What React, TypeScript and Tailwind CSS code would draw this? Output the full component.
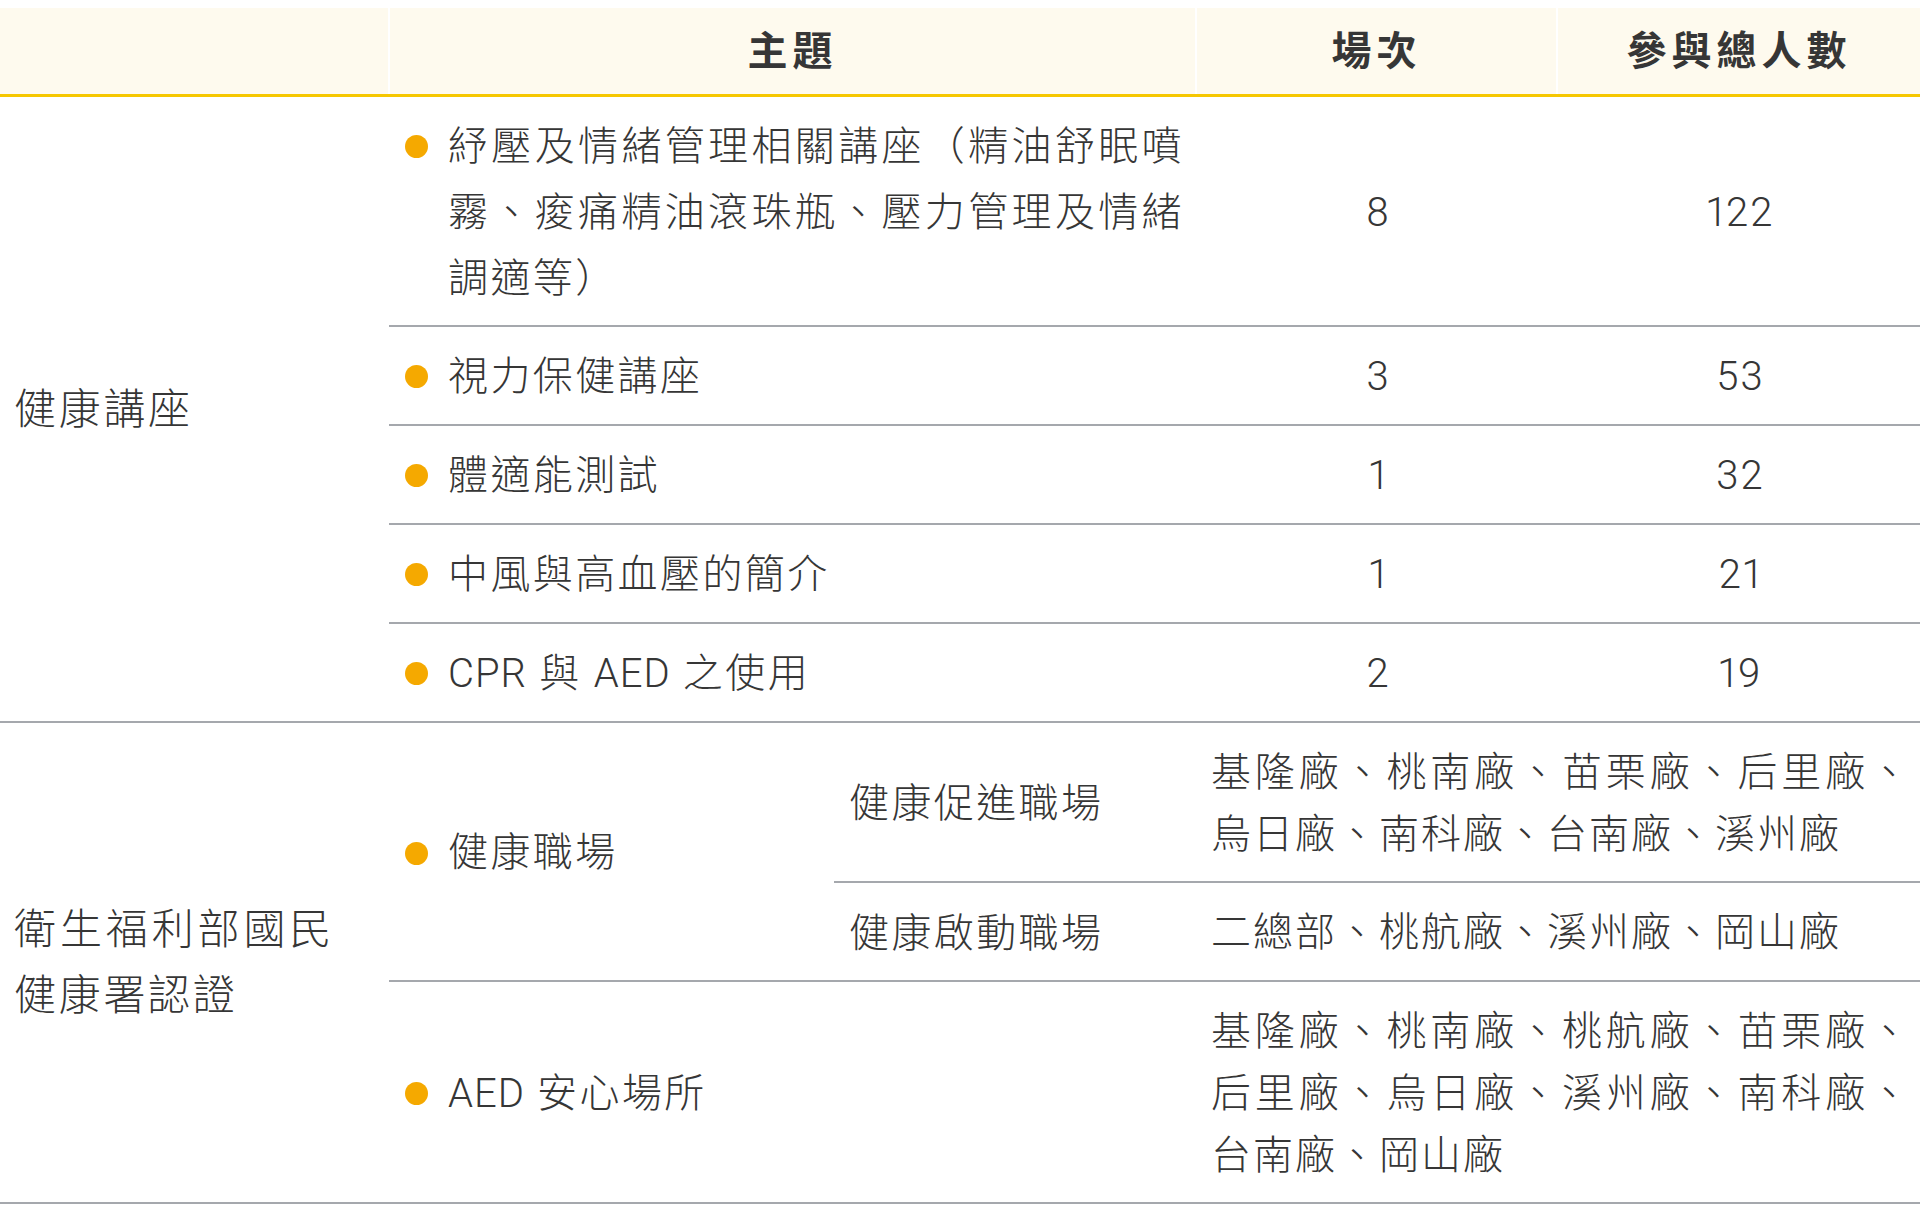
import React from "react";

const font = { fontFamily: '"Roboto", "Noto Sans CJK TC", sans-serif' };

function Bullet() {
  return (
    <span className="flex h-[66px] shrink-0 items-center">
      <span className="block h-[23px] w-[23px] rounded-full bg-[#f5a900]" />
    </span>
  );
}

function Topic({ children }: { children: React.ReactNode }) {
  return (
    <div className="flex">
      <Bullet />
      <div className="ml-[20px] w-[736px] text-justify leading-[66px] tracking-[2.4px]">{children}</div>
    </div>
  );
}

function Stations({ children }: { children: React.ReactNode }) {
  return <div className="w-[700px] text-justify leading-[62px] tracking-[2px]">{children}</div>;
}

function Lat({ children }: { children: React.ReactNode }) {
  return <span className="tracking-[1px]">{children}</span>;
}

const td = "border-b-2 border-[#a5a8ad] align-middle";
const th =
  "border-b-[3px] border-l-2 border-[#f6c700] border-l-white bg-[#fefaee] pt-[2px] text-center font-bold leading-[56px] tracking-[5px]";

export default function App() {
  const rows: { t: React.ReactNode; n: string; p: string }[] = [
    { t: "紓壓及情緒管理相關講座（精油舒眠噴霧、痠痛精油滾珠瓶、壓力管理及情緒調適等）", n: "8", p: "122" },
    { t: "視力保健講座", n: "3", p: "53" },
    { t: "體適能測試", n: "1", p: "32" },
    { t: "中風與高血壓的簡介", n: "1", p: "21" },
    {
      t: (
        <>
          <Lat>CPR</Lat> 與 <Lat>AED</Lat> 之使用
        </>
      ),
      n: "2",
      p: "19",
    },
  ];
  return (
    <div className="min-h-[1210px] w-[1920px] bg-white pt-2 text-[40px] font-light text-[#363636] proportional-nums" style={font}>
      <table className="w-[1920px] table-fixed border-collapse">
        <colgroup>
          <col className="w-[389px]" />
          <col className="w-[445px]" />
          <col className="w-[362px]" />
          <col className="w-[361px]" />
          <col className="w-[363px]" />
        </colgroup>
        <thead>
          <tr className="h-[87px]">
            <th className="border-b-[3px] border-[#f6c700] bg-[#fefaee]" />
            <th colSpan={2} className={th}>
              主題
            </th>
            <th className={th}>場次</th>
            <th className={th}>參與總人數</th>
          </tr>
        </thead>
        <tbody>
          {rows.map((r, i) => (
            <tr key={i}>
              {i === 0 && (
                <td rowSpan={5} className={`${td} pl-[14px] pt-[2px] text-[42px] leading-[66px] tracking-[2.7px]`}>
                  健康講座
                </td>
              )}
              <td colSpan={2} className={`${td} ${i === 0 ? "pt-[17px] pb-[13px]" : "pt-[17px] pb-[14px]"} pl-4`}>
                <Topic>{r.t}</Topic>
              </td>
              <td className={`${td} pt-[4px] pl-1 text-center tracking-[2px]`}>{r.n}</td>
              <td className={`${td} pt-[4px] pl-1 text-center tracking-[2px]`}>{r.p}</td>
            </tr>
          ))}
          <tr>
            <td rowSpan={3} className={`${td} pl-[14px] pt-[2px] text-[42px] leading-[66px] tracking-[2.7px]`}>
              <div className="w-[320px] text-justify">衛生福利部國民健康署認證</div>
            </td>
            <td rowSpan={2} className={`${td} pl-4 pt-[4px]`}>
              <Topic>健康職場</Topic>
            </td>
            <td className={`${td} pl-[15px] pt-[4px] leading-[66px] tracking-[2.4px]`}>健康促進職場</td>
            <td colSpan={2} className={`${td} pt-[19px] pb-[15px] pl-[15px]`}>
              <Stations>基隆廠、桃南廠、苗栗廠、后里廠、烏日廠、南科廠、台南廠、溪州廠</Stations>
            </td>
          </tr>
          <tr>
            <td className={`${td} pt-[18px] pb-[13px] pl-[15px] leading-[66px] tracking-[2.4px]`}>健康啟動職場</td>
            <td colSpan={2} className={`${td} pl-[15px] pt-[4px]`}>
              <Stations>二總部、桃航廠、溪州廠、岡山廠</Stations>
            </td>
          </tr>
          <tr>
            <td colSpan={2} className={`${td} pl-4 pt-[4px]`}>
              <Topic>
                <Lat>AED</Lat> 安心場所
              </Topic>
            </td>
            <td colSpan={2} className={`${td} pt-[19px] pb-[15px] pl-[15px]`}>
              <Stations>基隆廠、桃南廠、桃航廠、苗栗廠、后里廠、烏日廠、溪州廠、南科廠、台南廠、岡山廠</Stations>
            </td>
          </tr>
        </tbody>
      </table>
    </div>
  );
}
